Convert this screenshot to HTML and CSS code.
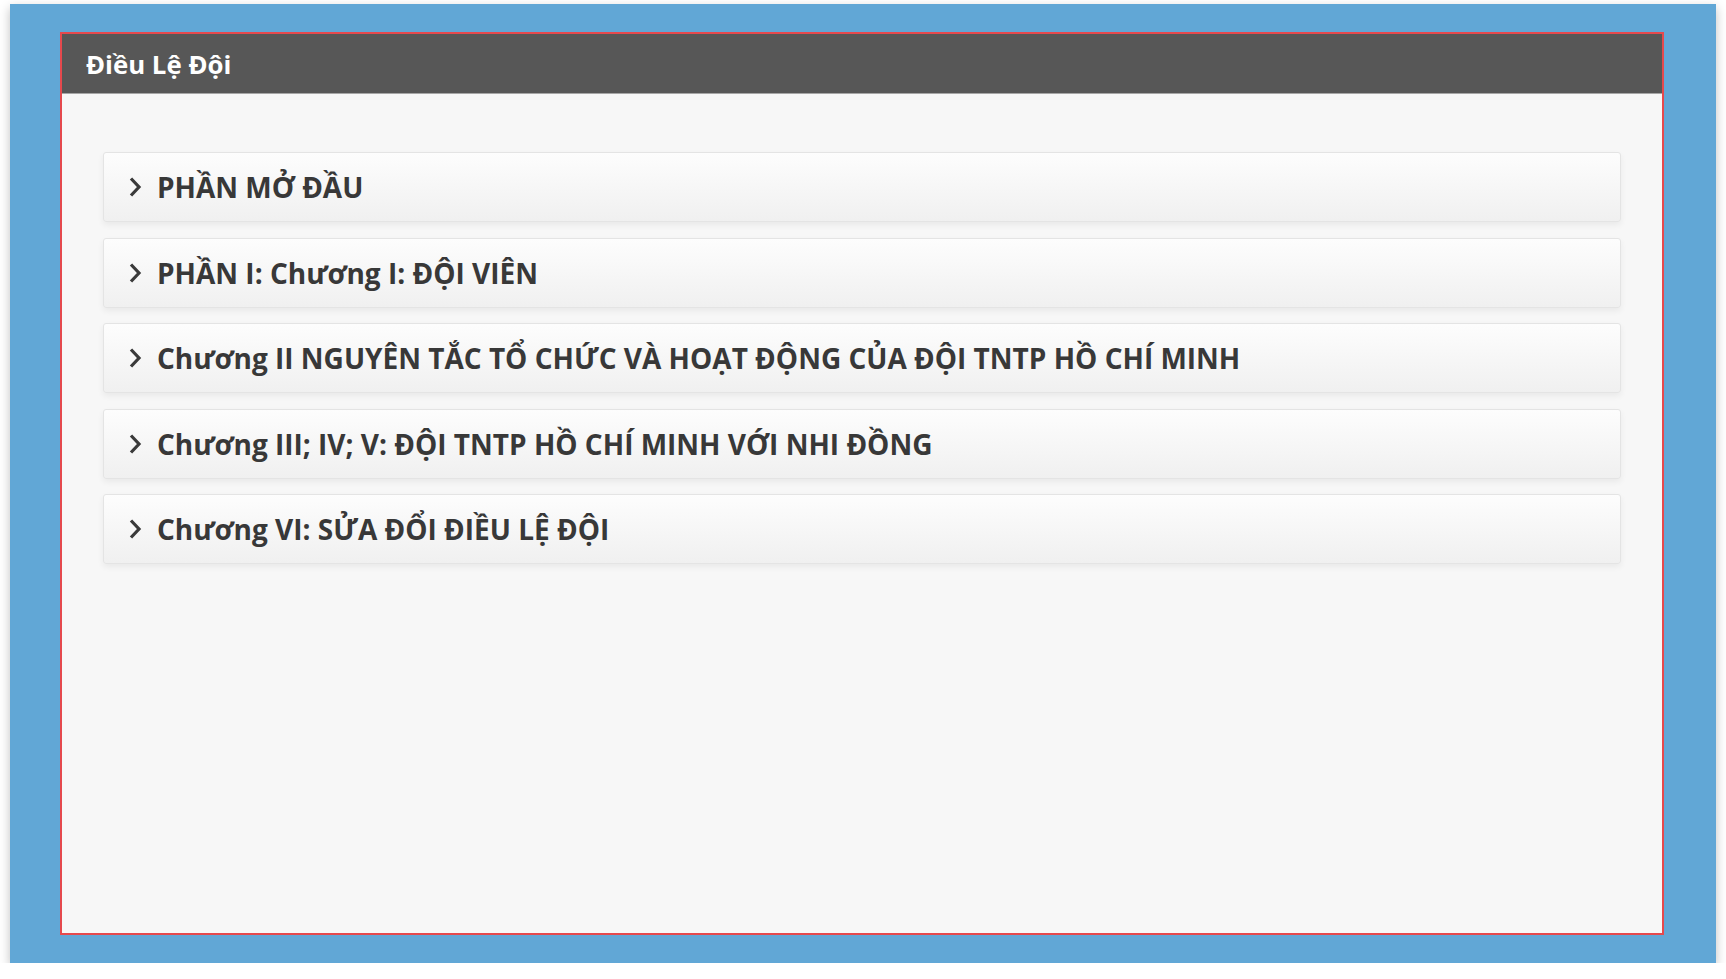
FILE: index.html
```html
<!DOCTYPE html>
<html lang="vi">
<head>
<meta charset="utf-8">
<title>Điều Lệ Đội</title>
<link rel="stylesheet" href="styles.css">
</head>
<body>
<div class="frame">
  <section class="panel">
    <header class="panel-head">Điều Lệ Đội</header>
    <div class="panel-body">
      <div class="item"><svg class="chev" viewBox="0 0 14 22" width="14" height="22"><path d="M3 2.5 L11 11 L3 19.5" /></svg><span class="label">PHẦN MỞ ĐẦU</span></div>
      <div class="item"><svg class="chev" viewBox="0 0 14 22" width="14" height="22"><path d="M3 2.5 L11 11 L3 19.5" /></svg><span class="label">PHẦN I: Chương I: ĐỘI VIÊN</span></div>
      <div class="item"><svg class="chev" viewBox="0 0 14 22" width="14" height="22"><path d="M3 2.5 L11 11 L3 19.5" /></svg><span class="label">Chương II NGUYÊN TẮC TỔ CHỨC VÀ HOẠT ĐỘNG CỦA ĐỘI TNTP HỒ CHÍ MINH</span></div>
      <div class="item"><svg class="chev" viewBox="0 0 14 22" width="14" height="22"><path d="M3 2.5 L11 11 L3 19.5" /></svg><span class="label">Chương III; IV; V: ĐỘI TNTP HỒ CHÍ MINH VỚI NHI ĐỒNG</span></div>
      <div class="item"><svg class="chev" viewBox="0 0 14 22" width="14" height="22"><path d="M3 2.5 L11 11 L3 19.5" /></svg><span class="label">Chương VI: SỬA ĐỔI ĐIỀU LỆ ĐỘI</span></div>
    </div>
  </section>
</div>
</body>
</html>
```

FILE: styles.css
```css
html, body { margin: 0; padding: 0; }
body { background: #ffffff; font-family: "Open Sans", "Noto Sans", sans-serif; }
.frame {
  margin: 4px 10px 0 10px;
  width: 1706px;
  height: 959px;
  box-sizing: border-box;
  background: #61a7d6;
  padding: 28px 52px 28px 50px;
  box-shadow: 0 4px 10px rgba(0,0,0,0.25);
}
.panel {
  height: 100%;
  box-sizing: border-box;
  border: 2px solid #e5494d;
  background: #f7f7f7;
  display: flex;
  flex-direction: column;
}
.panel-head {
  height: 59px;
  flex: none;
  background: #575757;
  border-bottom: 1px solid #a6a6a6;
  color: #ffffff;
  font-weight: 700;
  font-size: 25.8px;
  display: flex;
  align-items: center;
  padding-left: 24px;
}
.panel-body {
  padding: 58px 41px 0 41px;
  display: flex;
  flex-direction: column;
  gap: 15.5px;
}
.item {
  height: 70px;
  box-sizing: border-box;
  border: 1px solid #e4e4e4;
  border-radius: 3px;
  background: linear-gradient(#fdfdfd, #f0f0f0);
  box-shadow: 0 3px 6px rgba(0,0,0,0.06);
  display: flex;
  align-items: center;
  padding-left: 24px;
  color: #383838;
  font-weight: 700;
  font-size: 28px;
  white-space: nowrap;
}
.chev {
  flex: none;
  margin-right: 15px;
  fill: none;
  stroke: #3a3a3a;
  stroke-width: 3.2;
  stroke-linecap: butt;
  stroke-linejoin: miter;
}
```
